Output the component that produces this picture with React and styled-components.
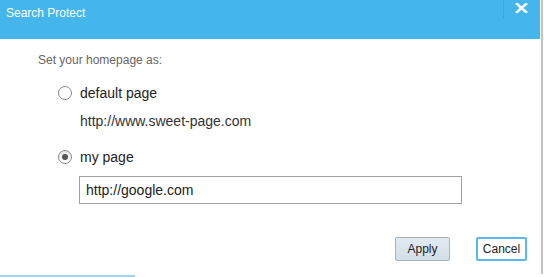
import React, { useState } from "react";
import styled, { createGlobalStyle } from "styled-components";

const GlobalStyle = createGlobalStyle`
	html, body {
		margin: 0;
		padding: 0;
		background: #ffffff;
	}
	body {
		font-family: "Liberation Sans", Arial, sans-serif;
	}
`;

const Dialog = styled.div`
	box-sizing: border-box;
	width: 543px;
	height: 274px;
	border-right: 2px solid #c4c4c4;
	display: flex;
	flex-direction: column;
	background: #ffffff;
`;

const Header = styled.div`
	height: 39px;
	margin-right: 1px;
	background: #45b6ec;
	display: flex;
	justify-content: space-between;
	align-items: flex-start;
	flex-shrink: 0;
`;

const Title = styled.div`
	color: #ffffff;
	font-size: 12px;
	line-height: 16px;
	padding: 5px 0 0 6px;
`;

const CloseBtn = styled.button`
	width: 36px;
	height: 18px;
	border: none;
	border-left: 1px solid #3ea8dc;
	background: transparent;
	padding: 0;
	margin-right: 1px;
	display: flex;
	align-items: center;
	justify-content: center;
	cursor: pointer;
	padding-bottom: 2px;
`;

const Body = styled.div`
	flex: 1;
	display: flex;
	flex-direction: column;
	padding: 14px 0 0 38px;
`;

const Prompt = styled.div`
	color: #666666;
	font-size: 12px;
	line-height: 14px;
`;

const Options = styled.div`
	display: flex;
	flex-direction: column;
	margin-left: 20px;
	margin-top: 18px;
`;

const OptionRow = styled.label`
	display: flex;
	align-items: center;
	gap: 8px;
	height: 16px;
	font-size: 14px;
	color: #222222;
	cursor: pointer;
	margin-top: ${(p) => p.$top || 0}px;
`;

const Radio = styled.span`
	box-sizing: border-box;
	width: 14px;
	height: 14px;
	border-radius: 50%;
	border: 1px solid #8a8a8a;
	background: ${(p) => (p.$checked ? "linear-gradient(#e6e6e6, #ffffff)" : "#ffffff")};
	display: flex;
	align-items: center;
	justify-content: center;

	&::after {
		content: "";
		width: 6px;
		height: 6px;
		border-radius: 50%;
		background: #555555;
		display: ${(p) => (p.$checked ? "block" : "none")};
	}
`;

const Url = styled.div`
	margin: 12px 0 0 22px;
	height: 16px;
	line-height: 16px;
	font-size: 14px;
	color: #333333;
`;

const UrlInput = styled.input`
	box-sizing: border-box;
	width: 383px;
	height: 28px;
	margin: 11px 0 0 41px;
	border: 1px solid #a0a0a0;
	padding: 0 6px;
	font-family: "Liberation Sans", Arial, sans-serif;
	font-size: 14px;
	color: #222222;
	outline: none;
`;

const Actions = styled.div`
	display: flex;
	justify-content: flex-end;
	gap: 26px;
	margin-top: 33px;
	padding-right: 14px;
`;

const Button = styled.button`
	box-sizing: border-box;
	height: 24px;
	width: ${(p) => p.$w}px;
	font-family: "Liberation Sans", Arial, sans-serif;
	font-size: 12px;
	color: #222222;
	border-radius: 2px;
	padding: 0;
	cursor: pointer;
	border: ${(p) => (p.$focus ? "2px solid #5ab8ec" : "1px solid #a8b4bd")};
	background: ${(p) => (p.$focus ? "#ffffff" : "linear-gradient(#e2ebf2, #d2dee8)")};
`;

const Footer = styled.div`
	width: 135px;
	height: 2px;
	margin-top: 1px;
	background: #9dd5f4;
`;

function App() {
	const [choice, setChoice] = useState("my");
	const [url, setUrl] = useState("http://google.com");

	return (
		<>
			<GlobalStyle />
			<Dialog>
				<Header>
					<Title>Search Protect</Title>
					<CloseBtn aria-label="close">
						<svg width="13" height="10" viewBox="0 0 13 10">
							<path d="M2 1 L11 9 M11 1 L2 9" stroke="#ffffff" strokeWidth="2.6" strokeLinecap="square" />
						</svg>
					</CloseBtn>
				</Header>
				<Body>
					<Prompt>Set your homepage as:</Prompt>
					<Options>
						<OptionRow onClick={() => setChoice("default")}>
							<Radio $checked={choice === "default"} />
							default page
						</OptionRow>
						<Url>http://www.sweet-page.com</Url>
						<OptionRow $top={20} onClick={() => setChoice("my")}>
							<Radio $checked={choice === "my"} />
							my page
						</OptionRow>
					</Options>
					<UrlInput value={url} onChange={(e) => setUrl(e.target.value)} />
					<Actions>
						<Button $w={55}>Apply</Button>
						<Button $w={51} $focus>
							Cancel
						</Button>
					</Actions>
				</Body>
			</Dialog>
			<Footer />
		</>
	);
}

export default App;
